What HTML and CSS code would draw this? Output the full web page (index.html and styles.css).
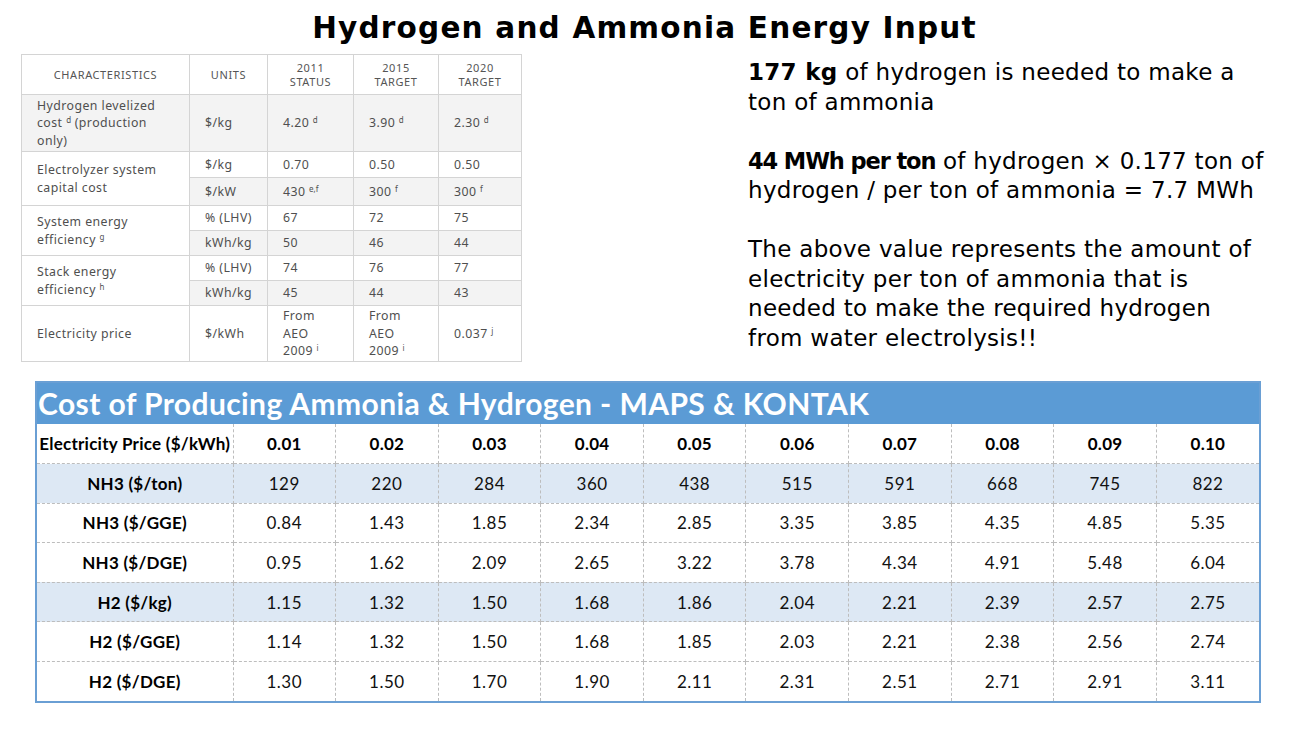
FILE: index.html
```html
<!DOCTYPE html>
<html lang="en">
<head>
<meta charset="utf-8">
<title>Hydrogen and Ammonia Energy Input</title>
<link rel="stylesheet" href="styles.css">
</head>
<body>
<div class="slide">
  <h1 class="title">Hydrogen and Ammonia Energy Input</h1>
  <div class="top">
    <table class="doe">
      <colgroup>
        <col class="c-char"><col class="c-units"><col class="c-2011"><col class="c-2015"><col class="c-2020">
      </colgroup>
      <tr class="head">
        <th>CHARACTERISTICS</th>
        <th>UNITS</th>
        <th>2011<br>STATUS</th>
        <th>2015<br>TARGET</th>
        <th>2020<br>TARGET</th>
      </tr>
      <tr class="r-lev grey">
        <td>Hydrogen levelized cost <sup>d</sup> (production only)</td>
        <td>$/kg</td>
        <td>4.20 <sup>d</sup></td>
        <td>3.90 <sup>d</sup></td>
        <td>2.30 <sup>d</sup></td>
      </tr>
      <tr class="r-a">
        <td rowspan="2" class="first">Electrolyzer system capital cost</td>
        <td>$/kg</td><td>0.70</td><td>0.50</td><td>0.50</td>
      </tr>
      <tr class="r-b grey">
        <td>$/kW</td><td>430 <sup>e,f</sup></td><td>300 <sup>f</sup></td><td>300 <sup>f</sup></td>
      </tr>
      <tr class="r-c">
        <td rowspan="2" class="first">System energy efficiency <sup>g</sup></td>
        <td>% (LHV)</td><td>67</td><td>72</td><td>75</td>
      </tr>
      <tr class="r-d grey">
        <td>kWh/kg</td><td>50</td><td>46</td><td>44</td>
      </tr>
      <tr class="r-c">
        <td rowspan="2" class="first">Stack energy efficiency <sup>h</sup></td>
        <td>% (LHV)</td><td>74</td><td>76</td><td>77</td>
      </tr>
      <tr class="r-d grey">
        <td>kWh/kg</td><td>45</td><td>44</td><td>43</td>
      </tr>
      <tr class="r-price">
        <td>Electricity price</td>
        <td>$/kWh</td>
        <td>From<br>AEO<br>2009 <sup>i</sup></td>
        <td>From<br>AEO<br>2009 <sup>i</sup></td>
        <td>0.037 <sup>j</sup></td>
      </tr>
    </table>
    <div class="notes">
      <p><b>177 kg</b> of hydrogen is needed to make a<br>ton of ammonia</p>
      <p><b class="tight">44 MWh per ton</b> of hydrogen × 0.177 ton of<br>hydrogen / per ton of ammonia = 7.7 MWh</p>
      <p>The above value represents the amount of<br>electricity per ton of ammonia that is<br>needed to make the required hydrogen<br>from water electrolysis!!</p>
    </div>
  </div>
  <div class="cost">
    <div class="cost-title">Cost of Producing Ammonia &amp; Hydrogen - MAPS &amp; KONTAK</div>
    <table class="cost-table">
      <colgroup>
        <col class="k-first">
        <col><col><col><col><col><col><col><col><col><col>
      </colgroup>
      <tr class="hdr">
        <th>Electricity Price ($/kWh)</th>
        <th>0.01</th><th>0.02</th><th>0.03</th><th>0.04</th><th>0.05</th><th>0.06</th><th>0.07</th><th>0.08</th><th>0.09</th><th>0.10</th>
      </tr>
      <tr class="band">
        <th>NH3 ($/ton)</th>
        <td>129</td><td>220</td><td>284</td><td>360</td><td>438</td><td>515</td><td>591</td><td>668</td><td>745</td><td>822</td>
      </tr>
      <tr>
        <th>NH3 ($/GGE)</th>
        <td>0.84</td><td>1.43</td><td>1.85</td><td>2.34</td><td>2.85</td><td>3.35</td><td>3.85</td><td>4.35</td><td>4.85</td><td>5.35</td>
      </tr>
      <tr>
        <th>NH3 ($/DGE)</th>
        <td>0.95</td><td>1.62</td><td>2.09</td><td>2.65</td><td>3.22</td><td>3.78</td><td>4.34</td><td>4.91</td><td>5.48</td><td>6.04</td>
      </tr>
      <tr class="band">
        <th>H2 ($/kg)</th>
        <td>1.15</td><td>1.32</td><td>1.50</td><td>1.68</td><td>1.86</td><td>2.04</td><td>2.21</td><td>2.39</td><td>2.57</td><td>2.75</td>
      </tr>
      <tr>
        <th>H2 ($/GGE)</th>
        <td>1.14</td><td>1.32</td><td>1.50</td><td>1.68</td><td>1.85</td><td>2.03</td><td>2.21</td><td>2.38</td><td>2.56</td><td>2.74</td>
      </tr>
      <tr>
        <th>H2 ($/DGE)</th>
        <td>1.30</td><td>1.50</td><td>1.70</td><td>1.90</td><td>2.11</td><td>2.31</td><td>2.51</td><td>2.71</td><td>2.91</td><td>3.11</td>
      </tr>
    </table>
  </div>
</div>
</body>
</html>
```

FILE: styles.css
```css
* { box-sizing: border-box; }

html, body {
  margin: 0;
  padding: 0;
  background: #ffffff;
}

.slide {
  width: 1307px;
  height: 735px;
  overflow: hidden;
  background: #ffffff;
  display: flex;
  flex-direction: column;
}

.title {
  margin: 0;
  height: 54px;
  line-height: 56px;
  padding-right: 18px;
  text-align: center;
  font-family: "DejaVu Sans", sans-serif;
  font-weight: bold;
  font-size: 29.5px;
  letter-spacing: 1.2px;
  color: #000;
}

/* ---------- top section ---------- */
.top {
  display: flex;
  align-items: flex-start;
  padding-left: 21px;
}

.doe {
  width: 500px;
  table-layout: fixed;
  border-collapse: collapse;
  font-family: "Noto Sans", sans-serif;
  font-size: 12.3px;
  letter-spacing: 0.45px;
  color: #4f4f4f;
  flex: none;
}

.doe .c-char { width: 168px; }
.doe .c-units { width: 78px; }
.doe .c-2011 { width: 86px; }
.doe .c-2015 { width: 85px; }
.doe .c-2020 { width: 83px; }

.doe th,
.doe td {
  border: 1px solid #d4d4d4;
  padding: 0 6px 0 15px;
  vertical-align: middle;
  text-align: left;
  line-height: 17.5px;
  font-weight: normal;
}

.doe td:first-child { padding-right: 30px; }

.doe th {
  text-align: center;
  font-size: 11px;
  letter-spacing: 0.6px;
  line-height: 13.5px;
  padding: 0 2px;
  color: #555;
}

.doe tr.head { height: 40px; }
.doe tr.r-lev { height: 57px; }
.doe tr.r-a { height: 26px; }
.doe tr.r-b { height: 28px; }
.doe tr.r-c { height: 25px; }
.doe tr.r-d { height: 25px; }
.doe tr.r-price { height: 56px; }

.doe tr.grey td { background: #f3f3f3; }
.doe td.first { background: #ffffff; }

.doe sup {
  display: inline-block;
  font-size: 8px;
  letter-spacing: 0;
  line-height: 8px;
  height: 8px;
  vertical-align: 4px;
}

.notes {
  margin-left: 226px;
  padding-top: 4px;
  font-family: "DejaVu Sans", sans-serif;
  font-size: 23px;
  letter-spacing: 0.3px;
  line-height: 29.5px;
  color: #000;
  white-space: nowrap;
}

.notes p {
  margin: 0 0 29.5px 0;
}

.notes p:last-child { margin-bottom: 0; }

.notes b { font-weight: bold; }

.notes b.tight {
  font-size: 22.5px;
  letter-spacing: -1.1px;
}

/* ---------- cost table ---------- */
.cost {
  margin-top: 19px;
  margin-left: 35px;
  width: 1226px;
  border: 2px solid #6a9fd4;
  font-family: Lato, "Liberation Sans", sans-serif;
}

.cost-title {
  height: 41px;
  background: #5b9bd5;
  color: #ffffff;
  font-weight: bold;
  font-size: 30px;
  letter-spacing: 0.4px;
  line-height: 41px;
  padding-left: 1px;
  white-space: nowrap;
}

.cost-table {
  width: 100%;
  table-layout: fixed;
  border-collapse: collapse;
  font-size: 17px;
  color: #000;
}

.cost-table .k-first { width: 196px; }

.cost-table th,
.cost-table td {
  height: 39.6px;
  padding: 0;
  text-align: center;
  vertical-align: middle;
  border: 1px dashed #bdbdbd;
  white-space: nowrap;
}

.cost-table th { font-weight: bold; letter-spacing: 0.25px; }
.cost-table td { font-weight: normal; color: #111; letter-spacing: 0.5px; }

.cost-table tr:first-child th,
.cost-table tr:first-child td { border-top: none; }
.cost-table tr:last-child th,
.cost-table tr:last-child td { border-bottom: none; }
.cost-table th:first-child { border-left: none; }
.cost-table tr > :last-child { border-right: none; }

.cost-table tr.band th,
.cost-table tr.band td { background: #dde8f4; }
```
